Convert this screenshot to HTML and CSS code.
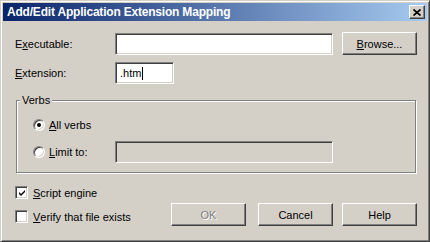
FILE: index.html
```html
<!DOCTYPE html>
<html lang="en">
<head>
    <meta charset="UTF-8">
    <title>Add/Edit Application Extension Mapping</title>
    <link rel="stylesheet" href="styles.css">
</head>
<body>
    <div class="window">
        <div class="titlebar">
            <span class="title">Add/Edit Application Extension Mapping</span>
            <div class="close">
                <svg width="8" height="7" viewBox="0 0 8 7">
                    <path d="M0.5 0.5 L7.5 6.5 M7.5 0.5 L0.5 6.5" stroke="#000" stroke-width="1.7" fill="none"/>
                </svg>
            </div>
        </div>

        <div class="content">
            <div class="row row-exe">
                <div class="label">E<u>x</u>ecutable:</div>
                <div class="edit edit-wide"></div>
                <button class="btn btn-browse"><u>B</u>rowse...</button>
            </div>

            <div class="row row-ext">
                <div class="label"><u>E</u>xtension:</div>
                <div class="edit edit-short">.htm<span class="caret"></span></div>
            </div>

            <div class="group">
                <span class="group-label">Verbs</span>
                <div class="option-row">
                    <div class="option"><span class="radio checked"></span><u>A</u>ll verbs</div>
                </div>
                <div class="option-row option-row-limit">
                    <div class="option"><span class="radio"></span><u>L</u>imit to:</div>
                    <div class="edit edit-wide edit-disabled"></div>
                </div>
            </div>

            <div class="check-row">
                <span class="checkbox">
                    <svg width="9" height="9" viewBox="0 0 9 9">
                        <path d="M1 3 L3 5 L7 1 L7 3 L3 7 L1 5 Z" fill="#000"/>
                    </svg>
                </span>
                <u>S</u>cript engine
            </div>

            <div class="bottom-row">
                <div class="check-row check-verify">
                    <span class="checkbox"></span>
                    <u>V</u>erify that file exists
                </div>
                <div class="buttons">
                    <button class="btn btn-disabled">OK</button>
                    <button class="btn btn-cancel">Cancel</button>
                    <button class="btn">Help</button>
                </div>
            </div>
        </div>
    </div>
</body>
</html>
```

FILE: styles.css
```css
body {
    margin: 0;
    background-color: #d4d0c8;
    font-family: "Liberation Sans", Arial, sans-serif;
    font-size: 11px;
    color: #000;
}
.window {
    width: 430px;
    height: 242px;
    box-sizing: border-box;
    border: 1px solid;
    border-color: #d4d0c8 #404040 #404040 #d4d0c8;
    box-shadow: inset 1px 1px #fff, inset -1px -1px #808080;
    padding: 2px;
    background-color: #d4d0c8;
}
.titlebar {
    height: 18px;
    background: linear-gradient(to right, #0a246a, #a6caf0);
    display: flex;
    align-items: center;
    justify-content: space-between;
    padding: 0 2px 0 4px;
}
.title {
    color: white;
    font-weight: bold;
    font-size: 12px;
    letter-spacing: -0.2px;
}
.close {
    width: 16px;
    height: 14px;
    box-sizing: border-box;
    background-color: #d4d0c8;
    border: 1px solid;
    border-color: #fff #404040 #404040 #fff;
    box-shadow: inset -1px -1px #808080;
    display: flex;
    align-items: center;
    justify-content: center;
}
.close svg {
    display: block;
}
.content {
    padding: 0 10px 0 12px;
}
.row {
    display: flex;
    align-items: center;
}
.row-exe {
    margin-top: 11px;
}
.row-ext {
    margin-top: 7px;
}
.label {
    width: 100px;
}
.edit {
    height: 22px;
    box-sizing: border-box;
    border: 1px solid;
    border-color: #808080 #fff #fff #808080;
    box-shadow: inset 1px 1px #404040, inset -1px -1px #d4d0c8;
    background-color: white;
    padding: 0 4px;
    display: flex;
    align-items: center;
}
.edit-wide {
    width: 218px;
}
.edit-short {
    width: 59px;
}
.edit-disabled {
    background-color: #d4d0c8;
}
.caret {
    display: inline-block;
    width: 1px;
    height: 13px;
    background-color: #000;
    margin-left: 1px;
}
.btn {
    width: 75px;
    height: 23px;
    box-sizing: border-box;
    padding: 0;
    font-family: "Liberation Sans", Arial, sans-serif;
    font-size: 11px;
    color: #000;
    background-color: #d4d0c8;
    border: 1px solid;
    border-color: #fff #404040 #404040 #fff;
    box-shadow: inset -1px -1px #808080;
}
.btn-browse {
    margin-left: 9px;
}
.btn-disabled {
    color: #808080;
    text-shadow: 1px 1px #fff;
}
.group {
    position: relative;
    margin: 16px 1px 0 1px;
    border: 1px solid #808080;
    box-shadow: inset 1px 1px #fff, 1px 1px #fff;
    padding: 17px 0 9px 16px;
}
.group-label {
    position: absolute;
    top: -7px;
    left: 3px;
    padding: 0 2px;
    background-color: #d4d0c8;
}
.option-row {
    display: flex;
    align-items: center;
    height: 13px;
}
.option-row-limit {
    height: 22px;
    margin-top: 10px;
}
.option {
    width: 82px;
    display: flex;
    align-items: center;
}
.radio {
    position: relative;
    width: 12px;
    height: 12px;
    box-sizing: border-box;
    border-radius: 50%;
    border: 1px solid;
    border-color: #808080 #fff #fff #808080;
    box-shadow: inset 1px 1px #404040, inset -1px -1px #d4d0c8;
    background-color: white;
    margin-right: 4px;
}
.radio.checked::after {
    content: "";
    position: absolute;
    left: 3px;
    top: 3px;
    width: 4px;
    height: 4px;
    border-radius: 50%;
    background-color: #000;
}
.check-row {
    display: flex;
    align-items: center;
    height: 13px;
    margin-top: 13px;
}
.checkbox {
    width: 13px;
    height: 13px;
    box-sizing: border-box;
    border: 1px solid;
    border-color: #808080 #fff #fff #808080;
    box-shadow: inset 1px 1px #404040, inset -1px -1px #d4d0c8;
    background-color: white;
    margin-right: 5px;
    display: flex;
    align-items: center;
    justify-content: center;
}
.checkbox svg {
    display: block;
    margin: 1px 0 0 1px;
}
.bottom-row {
    display: flex;
    align-items: flex-start;
    margin-top: 4px;
}
.check-verify {
    margin-top: 7px;
}
.buttons {
    margin-left: auto;
    display: flex;
}
.btn-disabled {
    margin-right: 12px;
}
.btn-cancel {
    margin-right: 9px;
}
```
